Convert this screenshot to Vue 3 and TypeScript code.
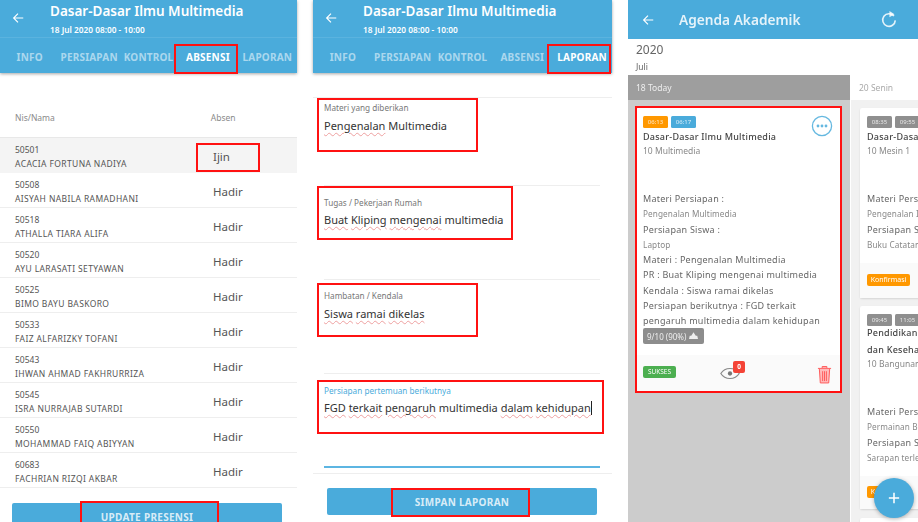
<script setup lang="ts">
const tabs = ['INFO', 'PERSIAPAN', 'KONTROL', 'ABSENSI', 'LAPORAN']
const students = [
  ['50501', 'ACACIA FORTUNA NADIYA', 'Ijin'],
  ['50508', 'AISYAH NABILA RAMADHANI', 'Hadir'],
  ['50518', 'ATHALLA TIARA ALIFA', 'Hadir'],
  ['50520', 'AYU LARASATI SETYAWAN', 'Hadir'],
  ['50525', 'BIMO BAYU BASKORO', 'Hadir'],
  ['50533', 'FAIZ ALFARIZKY TOFANI', 'Hadir'],
  ['50543', 'IHWAN AHMAD FAKHRURRIZA', 'Hadir'],
  ['50545', 'ISRA NURRAJAB SUTARDI', 'Hadir'],
  ['50550', 'MOHAMMAD FAIQ ABIYYAN', 'Hadir'],
  ['60683', 'FACHRIAN RIZQI AKBAR', 'Hadir'],
]
</script>

<template>
  <div class="page">
    <section class="panel first">
      <header class="head">
        <div class="titlebar">
          <svg class="back" viewBox="0 0 16 16"><path d="M14 8H3M8 3 3 8l5 5" /></svg>
          <div>
            <div class="title">Dasar-Dasar Ilmu Multimedia</div>
            <div class="sub">18 Jul 2020 08:00 - 10:00</div>
          </div>
        </div>
        <nav class="tabs">
          <div v-for="t in tabs" :key="t" class="tab" :class="{ on: t === 'ABSENSI' }">
            {{ t }}<i v-if="t === 'ABSENSI'" class="mark mark-tab"></i>
          </div>
        </nav>
      </header>
      <div class="thead"><span>Nis/Nama</span><span class="th-abs">Absen</span></div>
      <div
        v-for="(s, i) in students"
        :key="s[0]"
        class="row"
        :class="{ shade: i === 0 }"
      >
        <div class="who">
          <div>{{ s[0] }}</div>
          <div class="name">{{ s[1] }}</div>
        </div>
        <div class="state">{{ s[2] }}<i v-if="i === 0" class="mark mark-ijin"></i></div>
      </div>
      <button class="action action-update">UPDATE PRESENSI<i class="mark mark-update"></i></button>
    </section>

    <section class="panel second">
      <header class="head">
        <div class="titlebar">
          <svg class="back" viewBox="0 0 16 16"><path d="M14 8H3M8 3 3 8l5 5" /></svg>
          <div>
            <div class="title">Dasar-Dasar Ilmu Multimedia</div>
            <div class="sub">18 Jul 2020 08:00 - 10:00</div>
          </div>
        </div>
        <nav class="tabs">
          <div v-for="t in tabs" :key="t" class="tab" :class="{ on: t === 'LAPORAN' }">
            {{ t }}<i v-if="t === 'LAPORAN'" class="mark mark-tab2"></i>
          </div>
        </nav>
      </header>
      <div class="form">
        <div class="field f1">
          <label>Materi yang diberikan</label>
          <div class="value"><u>Pengenalan</u> Multimedia</div>
          <i class="mark mark-f1"></i>
        </div>
        <div class="field f2">
          <label>Tugas / Pekerjaan Rumah</label>
          <div class="value"><u>Buat</u> <u>Kliping</u> <u>mengenai</u> multimedia</div>
          <i class="mark mark-f2"></i>
        </div>
        <div class="field f3">
          <label>Hambatan / Kendala</label>
          <div class="value"><u>Siswa</u> <u>ramai</u> <u>dikelas</u></div>
          <i class="mark mark-f3"></i>
        </div>
        <div class="field f4">
          <label class="active">Persiapan pertemuan berikutnya</label>
          <div class="value"><u>FGD</u> <u>terkait</u> <u>pengaruh</u> multimedia <u>dalam</u> <u>kehidupan</u><b class="caret"></b></div>
          <i class="mark mark-f4"></i>
          <div class="focus-line"></div>
        </div>
      </div>
      <button class="action action-save">SIMPAN LAPORAN<i class="mark mark-save"></i></button>
    </section>

    <section class="panel third">
      <header class="agenda-head">
        <svg class="back back3" viewBox="0 0 16 16"><path d="M14 8H3M8 3 3 8l5 5" /></svg>
        <div class="agenda-title">Agenda Akademik</div>
        <svg class="refresh" viewBox="0 0 20 20"><path d="M15.5 6.2A7 7 0 1 0 17 11" /><path class="fill" d="M10.5 0.5v7l5.6-3.2z" /></svg>
      </header>
      <div class="year">2020</div>
      <div class="month">Juli</div>
      <div class="cols">
        <div class="col col-today">
          <div class="col-head">18 Today</div>
          <article class="card card-main">
            <div class="times"><span class="time orange">06:13</span><span class="time blue">06:17</span></div>
            <svg class="more" viewBox="0 0 22 22"><circle cx="11" cy="11" r="9.6" /><circle class="dot" cx="7" cy="11" r="1.4" /><circle class="dot" cx="11" cy="11" r="1.4" /><circle class="dot" cx="15" cy="11" r="1.4" /></svg>
            <h3>Dasar-Dasar Ilmu Multimedia</h3>
            <p class="room">10 Multimedia</p>
            <p class="line gap-top">Materi Persiapan :</p>
            <p class="line soft">Pengenalan Multimedia</p>
            <p class="line">Persiapan Siswa :</p>
            <p class="line soft">Laptop</p>
            <p class="line">Materi : Pengenalan Multimedia</p>
            <p class="line">PR : Buat Kliping mengenai multimedia</p>
            <p class="line">Kendala : Siswa ramai dikelas</p>
            <p class="line">Persiapan berikutnya : FGD terkait</p>
            <p class="line">pengaruh multimedia dalam kehidupan</p>
            <span class="score">9/10 (90%)
              <svg viewBox="0 0 12 10"><path d="M6 0 9 4.5H11L12 9H0L1 4.5H3z" /></svg>
            </span>
            <footer class="card-foot">
              <span class="pill green">SUKSES</span>
              <span class="eye">
                <svg viewBox="0 0 24 14"><path d="M1 7c5-8 17-8 22 0-5 8-17 8-22 0z" /><circle cx="12" cy="7" r="2.6" /></svg>
                <em>0</em>
              </span>
              <svg class="trash" viewBox="0 0 16 20"><path d="M1 3.5h14M5.5 3V1.5h5V3M2.5 4l1 15h9l1-15M6 6.5V17M10 6.5V17M8 6.5V17" /></svg>
            </footer>
            <i class="mark mark-card"></i>
          </article>
        </div>
        <div class="col col-next">
          <div class="col-head light">20 Senin</div>
          <article class="card card-b">
            <div class="times"><span class="time grey">08:35</span><span class="time grey">09:55</span></div>
            <h3>Dasar-Dasar Ilmu Multimedia</h3>
            <p class="room">10 Mesin 1</p>
            <p class="line gap-top">Materi Persiapan :</p>
            <p class="line soft">Pengenalan Ilmu</p>
            <p class="line">Persiapan Siswa :</p>
            <p class="line soft">Buku Catatan Harian</p>
            <footer class="card-foot foot-b"><span class="pill orange">Konfirmasi</span></footer>
          </article>
          <article class="card card-c">
            <div class="times"><span class="time grey">09:45</span><span class="time grey">11:05</span></div>
            <h3 class="h1">Pendidikan Jasmani</h3>
            <h3 class="h2">dan Kesehatan</h3>
            <p class="room">10 Bangunan 1</p>
            <p class="line gap-top3">Materi Persiapan :</p>
            <p class="line soft">Permainan Bola</p>
            <p class="line">Persiapan Siswa :</p>
            <p class="line soft">Sarapan terlebih dahulu</p>
            <footer class="card-foot foot-c"><span class="pill orange">Konfirmasi</span></footer>
          </article>
          <article class="card card-d"></article>
        </div>
      </div>
      <button class="fab">
        <svg viewBox="0 0 14 14"><path d="M7 1v12M1 7h12" /></svg>
      </button>
    </section>
  </div>
</template>

<style>
html, body { margin: 0; background: #fff; }
</style>

<style scoped>
.page {
  width: 918px;
  height: 522px;
  display: flex;
  gap: 16px;
  overflow: hidden;
  background: #fff;
  font-family: "Noto Sans", "Open Sans", sans-serif;
  color: #444;
}
.panel { position: relative; height: 522px; flex: none; background: #fff; }
.first { width: 297px; }
.second { width: 299px; }
.third { width: 290px; overflow: hidden; filter: blur(.35px); }

.mark { position: absolute; display: block; border: 2px solid #f11; box-sizing: border-box; pointer-events: none; }

.head { background: #4aabdb; box-shadow: 0 1px 3px rgba(0, 0, 0, .35); color: #fff; }
.titlebar { height: 38px; display: flex; box-sizing: border-box; padding: 1px 0 0 11px; border-bottom: 1px solid #5ab3df; }
.back { width: 14px; height: 14px; margin: 10px 25px 0 0; flex: none; }
.back path { fill: none; stroke: #fff; stroke-width: 1.3; }
.title { font-size: 13.5px; line-height: 20px; font-weight: 600; height: 20px; white-space: nowrap; }
.sub { font-size: 8.3px; line-height: 15px; font-weight: 600; white-space: nowrap; margin-top: 1px; }
.tabs { height: 35px; display: flex; }
.tab {
  position: relative;
  flex: 1 1 0;
  text-align: center;
  font-size: 10px;
  line-height: 38px;
  font-weight: 700;
  letter-spacing: .2px;
  color: rgba(255, 255, 255, .55);
}
.tab.on { color: #fff; }
.mark-tab { left: -4px; top: 6px; width: 64px; height: 30px; }
.mark-tab2 { left: -5px; top: 6px; width: 64px; height: 30px; }

.thead {
  height: 65px;
  box-sizing: border-box;
  padding: 39px 0 0 15px;
  display: flex;
  font-size: 8.5px;
  line-height: 12px;
  color: #8a8a8a;
  border-bottom: 1px solid #e8e8e8;
}
.th-abs { margin-left: 156px; }
.row {
  height: 35px;
  box-sizing: border-box;
  padding-left: 15px;
  display: flex;
  align-items: center;
  border-bottom: 1px solid #eee;
}
.row.shade { background: #f4f4f4; border-bottom-color: #f4f4f4; }
.who { width: 198px; flex: none; font-size: 8.5px; line-height: 14px; color: #555; white-space: nowrap; padding-top: 3px; }
.name { letter-spacing: .38px; }
.state { position: relative; font-size: 11.5px; color: #555; margin-top: 2px; }
.mark-ijin { left: -17px; top: -6px; width: 64px; height: 29px; }

.action {
  position: absolute;
  display: block;
  border: 0;
  padding: 0;
  background: #4aabdb;
  border-radius: 2px;
  color: rgba(255, 255, 255, .8);
  font: 700 10px "Noto Sans", sans-serif;
  letter-spacing: .3px;
  text-align: center;
}
.action-update { left: 12px; top: 503px; width: 270px; height: 30px; line-height: 27px; padding-bottom: 2px; }
.mark-update { left: 68px; top: -2px; width: 139px; height: 30px; }
.action-save { left: 14px; top: 488px; width: 270px; height: 27px; }
.mark-save { left: 64px; top: 0; width: 139px; height: 29px; }

.form { padding-top: 24px; }
.field { position: relative; margin-left: 11px; box-sizing: border-box; border-top: 1px solid #eee; }
.f1 { height: 88px; margin-left: 0; padding: 4px 0 0 11px; }
.f2 { height: 94px; margin-right: 12px; padding: 11px 0 0 0; }
.f3 { height: 94px; margin-right: 12px; padding: 10px 0 0 0; }
.f4 { height: 100px; margin-right: 12px; padding: 11px 0 0 0; }
.focus-line { position: absolute; left: 0; right: 0; top: 92px; height: 2px; background: #5cb5e2; }
label { display: block; font-size: 8.2px; line-height: 12px; color: #777; white-space: nowrap; }
label.active { color: #4aabdb; }
.value { font-size: 11px; line-height: 16px; margin-top: 4px; color: #333; white-space: nowrap; }
.f2 .value { margin-top: 3px; }
.f4 .value { margin-top: 3px; }
u { text-decoration: underline wavy #eea0a0; text-decoration-thickness: 1px; text-underline-offset: 2px; }
.caret { display: inline-block; width: 1px; height: 14px; background: #222; vertical-align: -3px; }
.mark-f1 { left: 4px; top: 0; width: 161px; height: 54px; }
.mark-f2 { left: -7px; top: 0; width: 196px; height: 54px; }
.mark-f3 { left: -7px; top: 3px; width: 161px; height: 54px; }
.mark-f4 { left: -7px; top: 6px; width: 287px; height: 54px; }
.second::after { content: ""; position: absolute; left: 0; right: 0; top: 473px; border-top: 1px solid #eee; }

.agenda-head { height: 39px; background: #4aabdb; display: flex; align-items: center; box-sizing: border-box; padding-left: 13px; }
.back3 { margin: 0; }
.agenda-title { margin-left: 24px; font-size: 13.7px; font-weight: 600; color: rgba(255, 255, 255, .85); width: 201px; white-space: nowrap; }
.refresh { width: 18px; height: 19px; }
.refresh path { fill: none; stroke: rgba(255, 255, 255, .85); stroke-width: 1.8; }
.refresh .fill { fill: rgba(255, 255, 255, .85); stroke: none; }
.year { font-size: 12px; line-height: 20px; padding: 1px 0 0 8px; color: #666; height: 20px; }
.month { font-size: 8.5px; line-height: 12px; padding: 1px 0 0 8px; color: #666; height: 13px; }
.cols { display: flex; height: 448px; margin-top: 1px; }
.col { flex: none; box-sizing: border-box; height: 448px; overflow: hidden; }
.col-today { width: 222px; background: #cccccc; margin-right: 1px; }
.col-next { width: 200px; background: #f1f1f1; }
.col-head { height: 25px; background: #9e9e9e; color: #eee; font-size: 8.5px; line-height: 25px; padding-left: 8px; }
.col-head.light { background: #fff; color: #aaa; }
.card { position: relative; box-sizing: border-box; background: #fff; box-shadow: 0 1px 2px rgba(0, 0, 0, .12); border-radius: 2px; }
.card-main { margin: 7px 0 0 9px; width: 204px; height: 284px; padding: 9px 6px 0; }
.card-b { margin: 8px 0 0 9px; width: 190px; height: 190px; padding: 8px 7px 0; }
.card-c { margin: 8px 0 0 9px; width: 190px; height: 203px; padding: 8px 7px 0; }
.card-d { margin: 9px 0 0 9px; width: 190px; height: 40px; }
.times { display: flex; gap: 3px; height: 12px; }
.time { width: 25px; height: 12px; border-radius: 1.5px; font-size: 6px; line-height: 12px; text-align: center; color: rgba(255, 255, 255, .8); }
.orange { background: #ff9800; }
.blue { background: #4aabdb; }
.grey { background: #8f8f8f; }
.more { position: absolute; right: 8px; top: 8px; width: 22px; height: 22px; }
.more circle { fill: none; stroke: #4aabdb; stroke-width: 1.3; opacity: .85; }
.more .dot { fill: #4aabdb; stroke: none; }
h3 { margin: 2px 0 0; font-size: 9px; line-height: 14px; height: 14px; font-weight: 500; letter-spacing: .25px; color: #444; white-space: nowrap; }
h3.h1 { margin-top: 0; }
h3.h2 { margin-top: 3px; }
p { margin: 0; white-space: nowrap; }
.room { font-size: 8.5px; line-height: 14px; color: #888; }
.line { font-size: 9px; line-height: 15.25px; letter-spacing: .25px; color: #666; }
.soft { font-size: 8.2px; color: #888; letter-spacing: .1px; }
.gap-top { margin-top: 33px; }
.gap-top3 { margin-top: 33px; }
.score { display: flex; width: 61px; box-sizing: border-box; align-items: center; gap: 3px; height: 16px; padding: 0 4px; background: #8d8d8d; border-radius: 2px; font-size: 8px; color: #eee; white-space: nowrap; }
.score svg { width: 9px; height: 8px; fill: #eee; flex: none; }
.card-foot { position: absolute; left: 0; right: 0; bottom: 0; height: 36px; background: #fafafa; }
.pill { position: absolute; left: 6px; top: 11px; height: 12px; border-radius: 2px; font-size: 6.5px; line-height: 12px; color: #fff; box-sizing: border-box; text-align: center; }
.green { background: #4caf50; width: 33px; }
.pill.orange { left: 7px; top: 11px; width: 43px; font-size: 7px; }
.foot-c .pill.orange { top: 10px; }
.eye { position: absolute; left: 83px; top: 12px; width: 20px; height: 13px; }
.eye svg { display: block; width: 20px; height: 13px; }
.eye svg path { fill: none; stroke: #888; stroke-width: 1.4; }
.eye svg circle { fill: #777; }
.eye em { position: absolute; left: 13px; top: -6px; width: 12px; height: 12px; border-radius: 2px; background: #f44336; color: #fff; font: 700 6.5px/12px "Noto Sans", sans-serif; text-align: center; }
.trash { position: absolute; right: 9px; top: 10px; width: 15px; height: 19px; }
.trash path { fill: #fbb; stroke: #f55; stroke-width: 1; }
.mark-card { left: -2px; top: -1px; width: 207px; height: 287px; }
.foot-b { height: 35px; }
.foot-c { height: 33px; }
.fab { position: absolute; left: 246px; top: 478px; width: 40px; height: 40px; padding: 0; border: 0; border-radius: 50%; background: #4aabdb; box-shadow: 0 1px 4px rgba(0, 0, 0, .3); display: flex; align-items: center; justify-content: center; }
.fab svg { width: 12px; height: 12px; }
.fab path { fill: none; stroke: #fff; stroke-width: 1.8; }
</style>
